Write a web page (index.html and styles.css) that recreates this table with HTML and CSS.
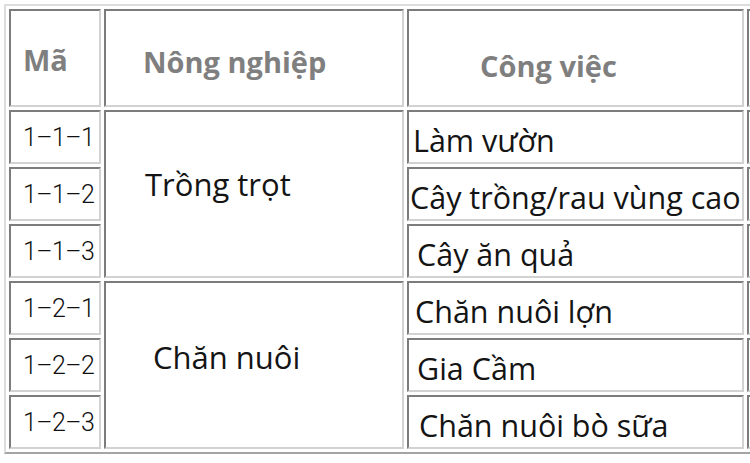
FILE: index.html
```html
<!DOCTYPE html>
<html lang="vi">
<head>
<meta charset="utf-8">
<title>Nông nghiệp</title>
<link rel="stylesheet" href="styles.css">
</head>
<body>
<table class="grid">
  <tr class="head">
    <th class="c-code">Mã</th>
    <th class="c-group">Nông nghiệp</th>
    <th class="c-job">Công việc</th>
    <th class="c-extra"></th>
  </tr>
  <tr class="row">
    <td class="code">1–1–1</td>
    <td class="group g1" rowspan="3">Trồng trọt</td>
    <td class="job j1">Làm vườn</td>
    <td class="extra"></td>
  </tr>
  <tr class="row">
    <td class="code">1–1–2</td>
    <td class="job j2">Cây trồng/rau vùng cao</td>
    <td class="extra"></td>
  </tr>
  <tr class="row">
    <td class="code">1–1–3</td>
    <td class="job j3">Cây ăn quả</td>
    <td class="extra"></td>
  </tr>
  <tr class="row">
    <td class="code">1–2–1</td>
    <td class="group g2" rowspan="3">Chăn nuôi</td>
    <td class="job j4">Chăn nuôi lợn</td>
    <td class="extra"></td>
  </tr>
  <tr class="row">
    <td class="code">1–2–2</td>
    <td class="job j5">Gia Cầm</td>
    <td class="extra"></td>
  </tr>
  <tr class="row">
    <td class="code">1–2–3</td>
    <td class="job j6">Chăn nuôi bò sữa</td>
    <td class="extra"></td>
  </tr>
</table>
</body>
</html>
```
FILE: styles.css
```css
html, body {
  margin: 0;
  padding: 0;
  background: #ffffff;
  overflow: hidden;
}

.grid {
  margin: 4px 0 0 4px;
  border-collapse: separate;
  border-spacing: 3px;
  border: 2px solid;
  border-color: #dcdcdc #a4a4a4 #a4a4a4 #dcdcdc;
  table-layout: fixed;
  width: 848px;
  font-family: "Open Sans", "Noto Sans", sans-serif;
  color: #141414;
}

.grid th,
.grid td {
  box-sizing: border-box;
  border: 2px solid;
  border-color: #7c7c7c #d2d2d2 #d2d2d2 #7c7c7c;
  padding: 0;
  white-space: nowrap;
  overflow: hidden;
  vertical-align: middle;
  text-align: left;
}

.head { height: 98px; }
.row { height: 54px; }

.grid th {
  font-weight: 700;
  font-size: 29px;
  color: #7f7f7f;
}

.grid .c-code { width: 92px; padding-left: 12px; padding-top: 3px; }
.grid .c-group { width: 300px; padding-left: 37px; padding-top: 6px; }
.grid .c-job { width: 337px; padding-left: 71px; padding-top: 14px; }
.grid .c-extra { width: 100px; }

.grid .code {
  font-family: Roboto, "DejaVu Sans", sans-serif;
  font-weight: 300;
  font-size: 25px;
  letter-spacing: -0.6px;
  padding-left: 12px;
  color: #111111;
}

.grid .group {
  font-size: 31px;
}
.grid .g1 { padding-left: 39px; padding-bottom: 20px; }
.grid .g2 { padding-left: 47px; padding-bottom: 16px; }

.grid .job {
  font-size: 30.5px;
  padding-top: 6px;
}
.grid .j1 { padding-left: 4px; }
.grid .j2 { padding-left: 1px; }
.grid .j3 { padding-left: 8px; }
.grid .j4 { padding-left: 6px; }
.grid .j5 { padding-left: 8px; }
.grid .j6 { padding-left: 10px; }
```
